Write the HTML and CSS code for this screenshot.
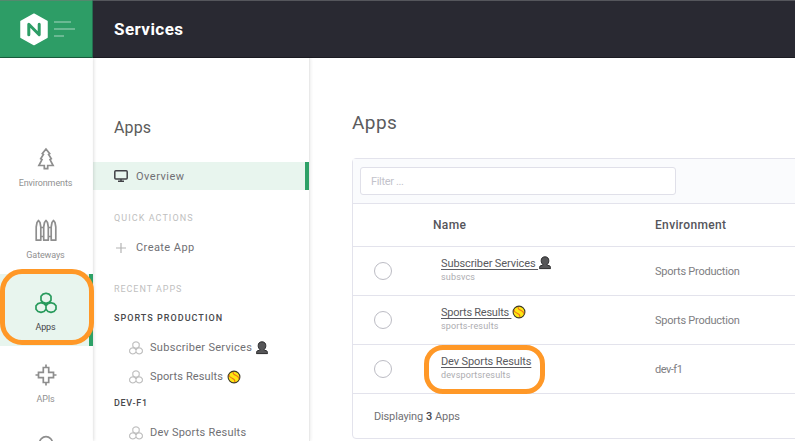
FILE: index.html
```
<!DOCTYPE html>
<html lang="en">
<head>
<meta charset="utf-8">
<title>Services – Apps</title>
<link rel="stylesheet" href="styles.css">
</head>
<body>
<svg class="defs" aria-hidden="true">
  <symbol id="cells" viewBox="0 0 22 22">
    <path d="M11 1.200l3 .9 2 2.200v4l-2 2.100-3 .9-3-.9-2-2.100v-4l2-2.200zM6 10.700l3 .9 2 2.200v3.500l-2 2.200-3 .9-3-.9-2-2.200v-3.500l2-2.200zM16 10.700l3 .9 2 2.200v3.500l-2 2.200-3 .9-3-.9-2-2.200v-3.500l2-2.200z" stroke-linejoin="round"/>
  </symbol>
  <symbol id="person" viewBox="0 0 12 14">
    <path d="M6 .8c2.500 0 3.800 1.600 3.800 3.900 0 1.700-.7 2.900-1.600 3.700v.8l2.600.7c.5.300.7.900.7 2.700H.5c0-1.800.2-2.400.7-2.700l2.600-.7v-.8C2.900 7.600 2.200 6.400 2.200 4.700 2.200 2.400 3.500.8 6 .8z" fill="#565658" stroke="#29292b"/>
  </symbol>
  <symbol id="ball" viewBox="0 0 14 14">
    <circle cx="7" cy="7" r="5.900" fill="#ffe812" stroke="#3c3827" stroke-width="1.100"/>
    <path d="M6 2c0 2 .9 2.700 2.700 3.300C10.800 6 11.600 7 12 8.800M2 5.200c.4 1.800 1.400 2.600 3.200 3.100 1.800.6 2.700 1.700 2.800 3.700" fill="none" stroke="#f0701c" stroke-width="1.100"/>
  </symbol>
</svg>
<div class="app">
  <header class="topbar">
    <div class="brand">
      <svg width="28" height="33" viewBox="0 0 28 33">
        <path d="M14 1.200L27 8.500v15.800L14 31.600 1 24.300V8.500z" fill="#fff" stroke="#fff" stroke-linejoin="round" stroke-width="1.500"/>
        <path d="M8.800 21.700V11.200l10.400 10.500V11.200" fill="none" stroke="#2d9d66" stroke-width="3" stroke-linecap="round" stroke-linejoin="round"/>
      </svg>
      <span class="lines"><i></i><i></i><i></i></span>
    </div>
    <div class="title">Services</div>
  </header>
  <div class="body">
    <nav class="rail">
      <a class="rail-item">
        <svg width="24" height="24" viewBox="0 0 24 24"><path d="M12 2L8.300 6.700l1.100.8-2.700 4.200 1.300.9-3.100 5.900h5.400v3.200h3.400v-3.200h5.400L16 12.600l1.300-.9-2.700-4.200 1.100-.8z"/></svg>
        <span>Environments</span>
      </a>
      <a class="rail-item">
        <svg width="24" height="24" viewBox="0 0 24 24"><path d="M4.500 1.500L3 3.500 2.200 8v13.200h4.600V8L6 3.500zM12 1.500l-1.500 2L9.700 8v13.200h4.600V8l-.8-4.500zM19.500 1.500l-1.500 2-.8 4.500v13.200h4.600V8L21 3.500zM6.800 8.500h2.900M14.300 8.500h2.900M6.800 17.500h2.900M14.300 17.500h2.900" stroke-linejoin="round"/></svg>
        <span>Gateways</span>
      </a>
      <a class="rail-item active">
        <svg width="22" height="22"><use href="#cells"/></svg>
        <span>Apps</span>
      </a>
      <a class="rail-item">
        <svg width="24" height="24" viewBox="0 0 24 24"><path d="M12 1.500v3M12 19.500v3M1.500 12h3M19.500 12h3M9.300 4.500h5.400v4.800h4.800v5.400h-4.800v4.800H9.300v-4.800H4.500V9.300h4.800z"/></svg>
        <span>APIs</span>
      </a>
      <a class="rail-item">
        <svg width="24" height="24" viewBox="0 0 24 24"><circle cx="12" cy="8.200" r="6.500"/></svg>
      </a>
    </nav>
    <aside class="side">
      <h2>Apps</h2>
      <a class="overview">
        <svg width="14" height="12" viewBox="0 0 14 12"><rect x=".8" y=".8" width="12.400" height="8.200" rx="1"/><path d="M7 9v2M4 11.200h6"/></svg>
        <span>Overview</span>
      </a>
      <div class="caption">QUICK ACTIONS</div>
      <a class="create">
        <svg width="14" height="12" viewBox="0 0 14 12"><path d="M7 1v10M2 6h10"/></svg>
        <span>Create App</span>
      </a>
      <div class="caption recent">RECENT APPS</div>
      <div class="group">SPORTS PRODUCTION</div>
      <a class="recent-app"><svg class="cell" width="14" height="14"><use href="#cells"/></svg><span>Subscriber Services</span><svg width="12" height="14"><use href="#person"/></svg></a>
      <a class="recent-app results"><svg class="cell" width="14" height="14"><use href="#cells"/></svg><span>Sports Results</span><svg width="14" height="14"><use href="#ball"/></svg></a>
      <div class="group dev">DEV-F1</div>
      <a class="recent-app last"><svg class="cell" width="14" height="14"><use href="#cells"/></svg><span>Dev Sports Results</span></a>
    </aside>
    <main>
      <h1>Apps</h1>
      <section class="card">
        <div class="filter"><input type="text" placeholder="Filter ..."></div>
        <div class="row head"><span></span><span class="name">Name</span><span>Environment</span></div>
        <div class="row">
          <i class="radio"></i>
          <div class="app-name"><a class="link">Subscriber Services <svg width="12" height="14"><use href="#person"/></svg></a><small>subsvcs</small></div>
          <span class="place">Sports Production</span>
        </div>
        <div class="row">
          <i class="radio"></i>
          <div class="app-name"><a class="link results">Sports Results <svg width="14" height="14"><use href="#ball"/></svg></a><small>sports-results</small></div>
          <span class="place">Sports Production</span>
        </div>
        <div class="row">
          <i class="radio"></i>
          <div class="app-name marked"><a class="link">Dev Sports Results</a><small>devsportsresults</small></div>
          <span class="place short">dev-f1</span>
        </div>
        <div class="foot">Displaying <b>3</b> Apps</div>
      </section>
    </main>
  </div>
</div>
</body>
</html>
```
FILE: styles.css
```
*, *::before, *::after { box-sizing: border-box; }
body {
  margin: 0;
  font: 11px/14px Roboto, "Liberation Sans", sans-serif;
  color: #707074;
  background: #fff;
}
.defs { position: absolute; width: 0; height: 0; }
.app { height: 441px; overflow: hidden; display: flex; flex-direction: column; }

.topbar { display: flex; height: 58px; flex: none; background: #292932; border-top: 1px solid #55565c; border-bottom: 1px solid #1b1b22; }
.brand { width: 93px; background: #2d9d66; border-right: 1px solid #246f50; display: flex; align-items: center; padding-left: 20px; gap: 6px; margin: -1px 0; border-top: 1px solid #54896e; border-bottom: 1px solid #19613e; }
.lines { display: flex; flex-direction: column; gap: 5px; }
.lines i { display: block; height: 2px; width: 17px; background: #6ab993; }
.lines i:nth-child(2) { width: 21px; }
.lines i:nth-child(3) { width: 10px; }
.title { padding-left: 21px; align-self: center; font-size: 17px; line-height: 20px; font-weight: 700; color: #fff; letter-spacing: .44px; }

.body { display: flex; flex: 1; min-height: 0; }
.rail { width: 93px; flex: none; padding-top: 72px; box-shadow: 1px 0 3px #0000001f; z-index: 1; }
.rail-item { display: flex; flex-direction: column; align-items: center; height: 72px; padding: 17px 2px 0 0; font-size: 9px; line-height: 12px; color: #919191; letter-spacing: -.12px; position: relative; }
.rail-item svg { height: 24px; margin-bottom: 6px; fill: none; stroke: #8e8e8e; stroke-width: 1.700; }
.rail-item.active { background: #e8f5ee; box-shadow: inset -4px 0 #2da167; color: #454549; }
.rail-item.active svg { stroke: #289a5c; stroke-width: 1.700; }
.rail-item.active::after { content: ""; position: absolute; left: 0; top: -5px; width: 94px; height: 76px; border: 5px solid #ff9827; border-radius: 22px; }

.side { width: 217px; flex: none; border-right: 1px solid #e9e9e9; box-shadow: 1px 0 3px #00000012; }
.side h2 { margin: 0; padding: 60px 0 0 21px; font-size: 16px; line-height: 20px; font-weight: 400; color: #5b5b5b; letter-spacing: .11px; }
.overview, .create, .recent-app { display: flex; align-items: center; padding-left: 21px; }
.overview { margin-top: 24px; height: 28px; gap: 8px; background: #e8f5ee; border-right: 4px solid #2da167; letter-spacing: .5px; }
.overview span { padding-top: 1px; }
.overview svg { fill: none; stroke: #414146; stroke-width: 1.500; }
.caption { padding: 21px 0 0 21px; font-size: 9px; line-height: 14px; color: #c0c0c0; letter-spacing: 1.080px; }
.create { height: 28px; margin-top: 9px; gap: 8px; letter-spacing: .43px; }
.create svg { stroke: #b4b4b4; stroke-width: 1.200; }
.caption.recent { padding-top: 20px; letter-spacing: .95px; }
.group { padding: 15px 0 0 21px; font-size: 9px; line-height: 14px; font-weight: 500; color: #48484b; letter-spacing: 1.030px; }
.recent-app { height: 29px; padding-left: 36px; letter-spacing: .3px; }
.group + .recent-app { margin-top: 8px; }
.recent-app.results { letter-spacing: .13px; }
.recent-app.last { letter-spacing: .22px; padding-top: 1px; }
.recent-app span { margin: 0 4px 0 7px; }
.recent-app .cell { fill: none; stroke: #c0c0c0; stroke-width: 1.800; }
.group.dev { padding-top: 5px; letter-spacing: .69px; }

main { flex: 1; min-width: 0; padding-left: 42px; }
h1 { margin: 53px 0 0; font-size: 19px; line-height: 24px; font-weight: 400; color: #5b5b5d; letter-spacing: .45px; }
.card { width: 500px; margin-top: 23px; height: 281px; border: 1px solid #e3e3ec; border-radius: 4px; }
.filter { height: 45px; padding: 8px 7px; background: #fafbfd; border-bottom: 1px solid #e3e3ec; }
.filter input { display: block; width: 316px; height: 28px; border: 1px solid #e0e0e9; border-radius: 3px; background: #fff; padding: 1px 10px; font: inherit; letter-spacing: -.34px; outline: 0; }
.filter input::placeholder { color: #c3c3cb; }
.row { display: grid; grid-template-columns: 88px 214px 1fr; align-items: center; height: 49px; border-bottom: 1px solid #e3e3ec; color: #7e7e82; letter-spacing: -.23px; }
.row.head { height: 43px; font-size: 12px; font-weight: 500; color: #55555b; letter-spacing: .34px; }
.row .name { margin-left: -8px; }
.row .place { padding-top: 2px; }
.row .short { letter-spacing: -.5px; }
.radio { width: 18px; height: 18px; margin-left: 21px; border: 1px solid #bcbcc4; border-radius: 50%; }
.app-name { position: relative; display: flex; flex-direction: column; align-items: flex-start; margin-top: -3px; }
.link { height: 15px; line-height: 14px; color: #5a5a60; letter-spacing: -.11px; text-decoration: underline; text-underline-offset: 2px; white-space: nowrap; }
.link.results { letter-spacing: -.24px; }
.marked .link { padding-top: 1px; height: 15px; }
.link svg { vertical-align: -3px; margin-left: 1px; }
.app-name small { font-size: 9px; line-height: 12px; color: #acacb0; letter-spacing: .16px; }
.marked::after { content: ""; position: absolute; left: -17px; top: -9px; width: 121px; height: 49px; border: 5px solid #ff9827; border-radius: 19px; }
.foot { display: flex; align-items: center; gap: 3px; height: 44px; padding: 1px 0 0 21px; letter-spacing: -.15px; }
.foot b { font-weight: 500; color: #44444a; }
```
